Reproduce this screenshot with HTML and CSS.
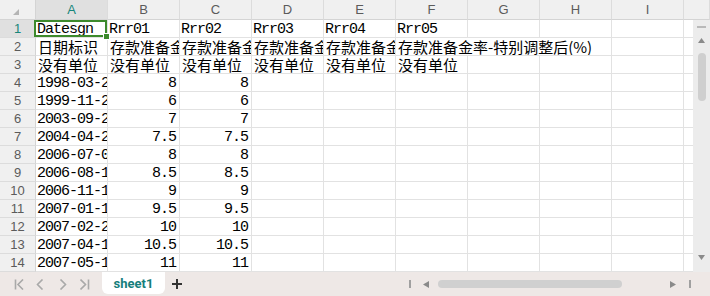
FILE: index.html
```html
<!DOCTYPE html>
<html lang="zh-CN">
  <head>
    <meta charset="UTF-8" />
    <title>sheet1</title>
    <link rel="stylesheet" href="styles.css">
  </head>
  <body>
    <div class="book">
      <div class="grid">
        <!-- 列头 -->
        <div class="h corner">
          <svg width="6" height="6" viewBox="0 0 6 6"><path d="M6 0V6H0Z" fill="#b4b4b4"/></svg>
        </div>
        <div class="h col on">A</div>
        <div class="h col">B</div>
        <div class="h col">C</div>
        <div class="h col">D</div>
        <div class="h col">E</div>
        <div class="h col">F</div>
        <div class="h col">G</div>
        <div class="h col">H</div>
        <div class="h col">I</div>
        <div class="h col tail"></div>

        <!-- 垂直滚动条 -->
        <div class="vscroll">
          <svg width="9" height="2" viewBox="0 0 9 2"><rect width="9" height="2" fill="#b9b9b9"/></svg>
          <svg class="up" width="7" height="5" viewBox="0 0 7 5"><path d="M3.5 0L7 5H0Z" fill="#8a8a8a"/></svg>
          <div class="vthumb"></div>
          <svg class="down" width="7" height="5" viewBox="0 0 7 5"><path d="M0 0H7L3.5 5Z" fill="#8a8a8a"/></svg>
        </div>

        <!-- 1 -->
        <div class="h row on">1</div>
        <div class="c a1">Datesgn<span class="sel"><span class="handle"></span></span></div>
        <div class="c">Rrr01</div>
        <div class="c">Rrr02</div>
        <div class="c">Rrr03</div>
        <div class="c">Rrr04</div>
        <div class="c">Rrr05</div>
        <div class="c"></div><div class="c"></div><div class="c"></div><div class="c j"></div>

        <!-- 2 -->
        <div class="h row">2</div>
        <div class="c zh">日期标识</div>
        <div class="c zh">存款准备金率-大型金融机构(%)</div>
        <div class="c zh">存款准备金率-中小金融机构(%)</div>
        <div class="c zh">存款准备金率-大型调整后(%)</div>
        <div class="c zh">存款准备金率-中小调整后(%)</div>
        <div class="c zh wide">存款准备金率-特别调整后(%)</div>
        <div class="c"></div><div class="c j"></div>

        <!-- 3 -->
        <div class="h row">3</div>
        <div class="c zh">没有单位</div>
        <div class="c zh">没有单位</div>
        <div class="c zh">没有单位</div>
        <div class="c zh">没有单位</div>
        <div class="c zh">没有单位</div>
        <div class="c zh">没有单位</div>
        <div class="c"></div><div class="c"></div><div class="c"></div><div class="c j"></div>

        <!-- 4 -->
        <div class="h row">4</div>
        <div class="c">1998-03-21</div>
        <div class="c n">8</div>
        <div class="c n">8</div>
        <div class="c"></div><div class="c"></div><div class="c"></div><div class="c"></div><div class="c"></div><div class="c"></div><div class="c j"></div>

        <!-- 5 -->
        <div class="h row">5</div>
        <div class="c">1999-11-21</div>
        <div class="c n">6</div>
        <div class="c n">6</div>
        <div class="c"></div><div class="c"></div><div class="c"></div><div class="c"></div><div class="c"></div><div class="c"></div><div class="c j"></div>

        <!-- 6 -->
        <div class="h row">6</div>
        <div class="c">2003-09-21</div>
        <div class="c n">7</div>
        <div class="c n">7</div>
        <div class="c"></div><div class="c"></div><div class="c"></div><div class="c"></div><div class="c"></div><div class="c"></div><div class="c j"></div>

        <!-- 7 -->
        <div class="h row">7</div>
        <div class="c">2004-04-25</div>
        <div class="c n">7.5</div>
        <div class="c n">7.5</div>
        <div class="c"></div><div class="c"></div><div class="c"></div><div class="c"></div><div class="c"></div><div class="c"></div><div class="c j"></div>

        <!-- 8 -->
        <div class="h row">8</div>
        <div class="c">2006-07-05</div>
        <div class="c n">8</div>
        <div class="c n">8</div>
        <div class="c"></div><div class="c"></div><div class="c"></div><div class="c"></div><div class="c"></div><div class="c"></div><div class="c j"></div>

        <!-- 9 -->
        <div class="h row">9</div>
        <div class="c">2006-08-15</div>
        <div class="c n">8.5</div>
        <div class="c n">8.5</div>
        <div class="c"></div><div class="c"></div><div class="c"></div><div class="c"></div><div class="c"></div><div class="c"></div><div class="c j"></div>

        <!-- 10 -->
        <div class="h row">10</div>
        <div class="c">2006-11-15</div>
        <div class="c n">9</div>
        <div class="c n">9</div>
        <div class="c"></div><div class="c"></div><div class="c"></div><div class="c"></div><div class="c"></div><div class="c"></div><div class="c j"></div>

        <!-- 11 -->
        <div class="h row">11</div>
        <div class="c">2007-01-15</div>
        <div class="c n">9.5</div>
        <div class="c n">9.5</div>
        <div class="c"></div><div class="c"></div><div class="c"></div><div class="c"></div><div class="c"></div><div class="c"></div><div class="c j"></div>

        <!-- 12 -->
        <div class="h row">12</div>
        <div class="c">2007-02-25</div>
        <div class="c n">10</div>
        <div class="c n">10</div>
        <div class="c"></div><div class="c"></div><div class="c"></div><div class="c"></div><div class="c"></div><div class="c"></div><div class="c j"></div>

        <!-- 13 -->
        <div class="h row">13</div>
        <div class="c">2007-04-16</div>
        <div class="c n">10.5</div>
        <div class="c n">10.5</div>
        <div class="c"></div><div class="c"></div><div class="c"></div><div class="c"></div><div class="c"></div><div class="c"></div><div class="c j"></div>

        <!-- 14 -->
        <div class="h row">14</div>
        <div class="c">2007-05-15</div>
        <div class="c n">11</div>
        <div class="c n">11</div>
        <div class="c"></div><div class="c"></div><div class="c"></div><div class="c"></div><div class="c"></div><div class="c"></div><div class="c j"></div>
      </div>

      <!-- 底部工作表标签栏 -->
      <div class="tabs">
        <div class="nav">
          <svg width="10" height="11" viewBox="0 0 10 11"><path d="M1.5 0.5V10.5M9 0.5L4 5.5L9 10.5" fill="none" stroke="#a9a9a9" stroke-width="1.6"/></svg>
          <svg width="10" height="11" viewBox="0 0 10 11"><path d="M6.5 0.5L1.5 5.5L6.5 10.5" fill="none" stroke="#a9a9a9" stroke-width="1.6"/></svg>
          <svg width="10" height="11" viewBox="0 0 10 11"><path d="M2.5 0.5L7.5 5.5L2.5 10.5" fill="none" stroke="#a9a9a9" stroke-width="1.6"/></svg>
          <svg width="10" height="11" viewBox="0 0 10 11"><path d="M0.5 0.5L5.5 5.5L0.5 10.5M8.5 0.5V10.5" fill="none" stroke="#a9a9a9" stroke-width="1.6"/></svg>
        </div>
        <div class="tab">sheet1</div>
        <svg class="plus" width="10" height="10" viewBox="0 0 10 10"><path d="M5 0V10M0 5H10" stroke="#333" stroke-width="2"/></svg>
        <div class="hscroll">
          <span class="bar"></span>
          <svg width="6" height="7" viewBox="0 0 6 7"><path d="M0 3.5L6 0V7Z" fill="#8a8a8a"/></svg>
          <div class="hthumb"></div>
          <svg width="6" height="7" viewBox="0 0 6 7"><path d="M6 3.5L0 0V7Z" fill="#8a8a8a"/></svg>
          <span class="bar"></span>
        </div>
      </div>
    </div>
  </body>
</html>
```

FILE: styles.css
```css
body {
  margin: 0;
  background-color: #ffffff;
  overflow: hidden;
}

.book {
  width: 710px;
  height: 296px;
  display: flex;
  flex-direction: column;
}

/* 表格区域 */
.grid {
  display: grid;
  grid-template-columns: 36px repeat(9, 72px) 9px 17px;
  grid-template-rows: 20px repeat(14, 18px);
}

/* 行列标题 */
.h {
  box-sizing: border-box;
  background-color: #f0f0f0;
  color: #5b5b5b;
  font-family: "Liberation Sans", Arial, sans-serif;
  font-size: 13px;
  display: flex;
  align-items: center;
  justify-content: center;
}

.col {
  border-right: 1px solid #dcdcdc;
  border-bottom: 1px solid #d4d4d4;
}

.row {
  border-right: 1px solid #d4d4d4;
  border-bottom: 1px solid #dcdcdc;
}

.corner {
  border-right: 1px solid #d4d4d4;
  border-bottom: 1px solid #d4d4d4;
}

.corner svg {
  margin: 4px 0 0 -4px;
}

.tail {
  grid-column: span 2;
  border-bottom: 1px solid #d4d4d4;
}

.on {
  background-color: #e0e0e0;
  color: #17867a;
}

/* 单元格 */
.c {
  box-sizing: border-box;
  border-right: 1px solid #e2e2e2;
  border-bottom: 1px solid #e2e2e2;
  overflow: hidden;
  white-space: nowrap;
  padding: 2px 3px 0 1px;
  font-family: "Liberation Mono", monospace;
  font-size: 15px;
  line-height: 15px;
  letter-spacing: -1px;
  color: #000000;
}

.n {
  text-align: right;
}

.zh {
  font-family: "Noto Sans CJK SC", sans-serif;
  font-size: 15px;
  line-height: 17px;
  letter-spacing: 0;
  padding: 0 0 0 2px;
}

.wide {
  grid-column: span 3;
}

.j {
  border-right: none;
}

/* 选中单元格 */
.a1 {
  position: relative;
  overflow: visible;
}

.sel {
  position: absolute;
  top: 0;
  right: 0;
  bottom: 0;
  left: -2px;
  border: 2px solid #3d8a2c;
}

.handle {
  position: absolute;
  right: -5px;
  bottom: -5px;
  width: 5px;
  height: 5px;
  background-color: #3d8a2c;
  border: 1px solid #ffffff;
}

/* 垂直滚动条 */
.vscroll {
  grid-column: 12;
  grid-row: 2 / span 14;
  background-color: #ececec;
  display: flex;
  flex-direction: column;
  align-items: center;
  padding: 6px 0 12px 0;
  box-sizing: border-box;
}

.vscroll .up {
  margin-top: 10px;
}

.vthumb {
  margin-top: 10px;
  width: 8px;
  height: 48px;
  border-radius: 4px;
  background-color: #cfcfcf;
}

.vscroll .down {
  margin-top: auto;
}

/* 工作表标签栏 */
.tabs {
  flex: 1;
  display: flex;
  align-items: center;
  background-color: #eee8e6;
}

.nav {
  display: flex;
  align-items: center;
  gap: 12px;
  padding-left: 14px;
}

.tab {
  align-self: flex-start;
  margin-left: 12px;
  width: 63px;
  height: 22px;
  background-color: #ffffff;
  border-radius: 0 0 6px 6px;
  color: #167e7b;
  font-family: Roboto, sans-serif;
  font-size: 13px;
  font-weight: bold;
  display: flex;
  align-items: center;
  justify-content: center;
}

.plus {
  margin-left: 7px;
}

.hscroll {
  margin-left: auto;
  padding-right: 19px;
  display: flex;
  align-items: center;
}

.hscroll .bar {
  width: 2px;
  height: 8px;
  background-color: #a0a0a0;
}

.hscroll svg:first-of-type {
  margin: 0 9px 0 12px;
}

.hscroll svg:last-of-type {
  margin: 0 13px 0 48px;
}

.hthumb {
  width: 184px;
  height: 8px;
  border-radius: 4px;
  background-color: #d0d0d0;
}
```
